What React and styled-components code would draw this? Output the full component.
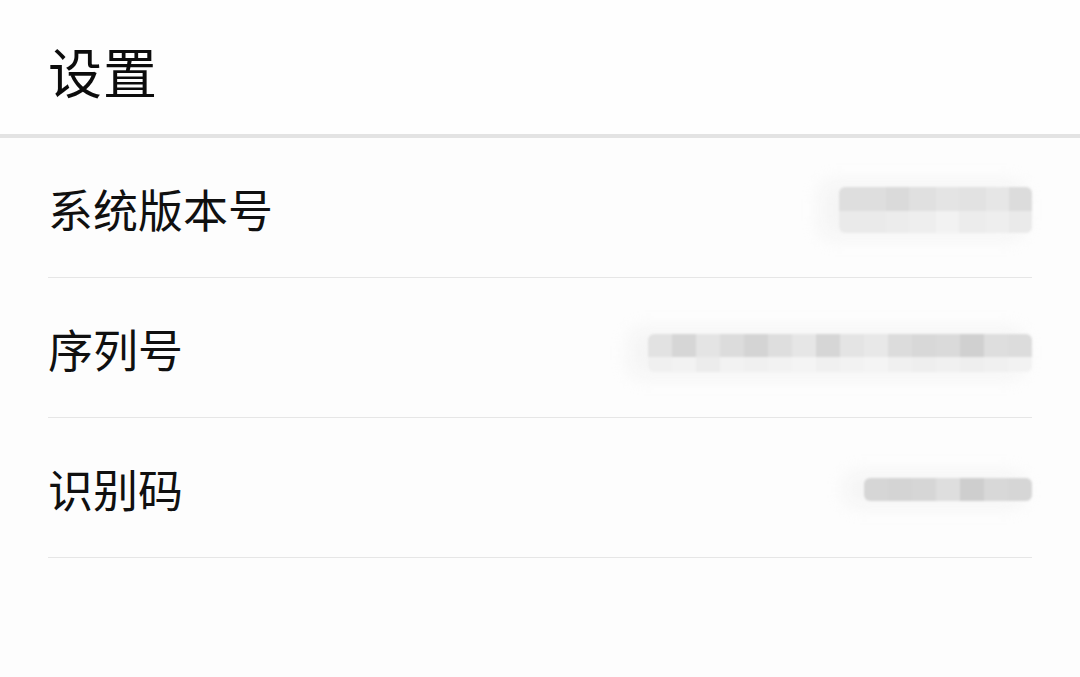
import React from 'react';
import styled, {createGlobalStyle} from 'styled-components';

const GlobalStyle = createGlobalStyle`
  html, body {
    margin: 0;
    padding: 0;
    background: #fdfdfd;
    font-family: "Noto Sans CJK SC", "Noto Sans", sans-serif;
  }
`;

const Page = styled.div`
  width: 1080px;
  height: 677px;
  overflow: hidden;
  background: #fdfdfd;
`;

// 상단 제목 영역
const Header = styled.header`
  height: 138px;
  display: flex;
  align-items: center;
  padding: 6px 0 0 48px;
  box-sizing: border-box;
  background: #fefefe;
  border-bottom: 4px solid #e3e3e3;
`;

const Title = styled.h1`
  margin: 0;
  font-size: 54px;
  font-weight: 400;
  color: #0c0c0c;
  letter-spacing: 1px;
`;

const List = styled.ul`
  list-style: none;
  margin: 0;
  padding: 0 48px;
`;

const Row = styled.li`
  height: 140px;
  box-sizing: border-box;
  display: flex;
  align-items: center;
  justify-content: space-between;
  border-bottom: 1px solid #e6e6e6;
`;

const Label = styled.span`
  font-size: 45px;
  color: #101010;
  padding-top: 2px;
`;

// 가려진 값 (모자이크)
const Mosaic = styled.div`
  display: flex;
  flex-direction: column;
  margin-top: ${p => p.$offset}px;
  filter: blur(1.2px);
  border-radius: 6px;
  overflow: hidden;
  box-shadow: -14px 0 18px 6px rgba(240, 240, 240, 0.6);
`;

const Strip = styled.div`
  display: flex;
  height: ${p => p.$h}px;
`;

const Cell = styled.div`
  width: ${p => p.$w}px;
  background: rgb(${p => p.$g}, ${p => p.$g}, ${p => p.$g});
`;

const rows = [
  {
    label: '系统版本号',
    offset: 4,
    strips: [
      {h: 24, cells: [[47, 222], [23, 218], [27, 224], [23, 228], [27, 226], [23, 230], [23, 220]]},
      {h: 22, cells: [[47, 234], [23, 236], [27, 238], [23, 242], [27, 236], [23, 238], [23, 234]]},
    ],
  },
  {
    label: '序列号',
    offset: 10,
    strips: [
      {h: 23, cells: [[24, 226], [24, 214], [24, 228], [24, 220], [24, 212], [24, 222], [24, 230], [24, 214], [24, 228], [24, 232], [24, 220], [24, 216], [24, 218], [24, 208], [24, 222], [24, 220]]},
      {h: 15, cells: [[24, 240], [24, 242], [24, 236], [24, 242], [24, 240], [24, 242], [24, 244], [24, 240], [24, 242], [24, 244], [24, 240], [24, 238], [24, 240], [24, 238], [24, 240], [24, 242]]},
    ],
  },
  {
    label: '识别码',
    offset: 4,
    strips: [
      {h: 23, cells: [[24, 214], [24, 212], [24, 214], [24, 222], [24, 206], [24, 216], [24, 214]]},
    ],
  },
];

function App() {
  return (
    <Page>
      <GlobalStyle/>
      <Header>
        <Title>设置</Title>
      </Header>
      <List>
        {rows.map(r => (
          <Row key={r.label}>
            <Label>{r.label}</Label>
            <Mosaic $offset={r.offset}>
              {r.strips.map((s, i) => (
                <Strip key={i} $h={s.h}>
                  {s.cells.map(([w, g], j) => <Cell key={j} $w={w} $g={g}/>)}
                </Strip>
              ))}
            </Mosaic>
          </Row>
        ))}
      </List>
    </Page>
  );
}

export default App;
